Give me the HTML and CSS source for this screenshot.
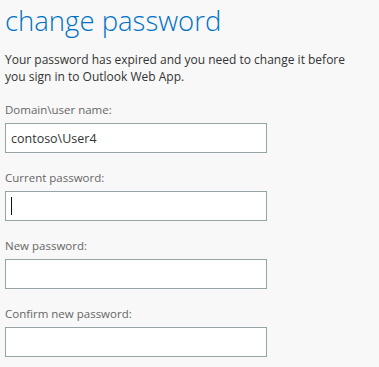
FILE: index.html
```html
<!DOCTYPE html>
<html lang="en">
<head>
  <meta charset="UTF-8">
  <title>change password</title>
  <link rel="stylesheet" href="styles.css">
</head>
<body>
  <div class="page">
    <h1 class="title">change password</h1>
    <p class="intro">Your password has expired and you need to change it before you sign in to Outlook Web App.</p>

    <form class="form">
      <div class="field">
        <label for="user">Domain\user name:</label>
        <input type="text" id="user" value="contoso\User4">
      </div>
      <div class="field">
        <label for="current">Current password:</label>
        <div class="input-wrap">
          <input type="password" id="current">
          <span class="caret"></span>
        </div>
      </div>
      <div class="field">
        <label for="newpass">New password:</label>
        <input type="password" id="newpass">
      </div>
      <div class="field">
        <label for="confirm">Confirm new password:</label>
        <input type="password" id="confirm">
      </div>
    </form>
  </div>
</body>
</html>
```

FILE: styles.css
```css
html, body {
  margin: 0;
  background-color: #f8f8f8;
}

body {
  font-family: "Open Sans", "Liberation Sans", sans-serif;
  color: #333;
}

.page {
  padding: 2px 0 0 5px;
}

.title {
  margin: 0;
  font-size: 27.5px;
  font-weight: 300;
  color: #0072c6;
  line-height: 38px;
}

.intro {
  margin: 11px 0 0;
  width: 360px;
  font-size: 12px;
  line-height: 17px;
  color: #333;
}

.form {
  margin-top: 18px;
  display: flex;
  flex-direction: column;
  gap: 18px;
}

.field label {
  display: block;
  font-size: 11.5px;
  line-height: 14px;
  color: #666;
  margin-bottom: 6px;
}

.field input {
  display: block;
  box-sizing: border-box;
  width: 262px;
  height: 30px;
  margin: 0;
  padding: 0 5px;
  border: 1px solid #98a3a6;
  background: #fff;
  font-family: inherit;
  font-size: 12.5px;
  color: #333;
  outline: none;
}

.input-wrap {
  position: relative;
  width: 262px;
}

.caret {
  position: absolute;
  left: 6px;
  top: 6px;
  width: 1px;
  height: 18px;
  background: #111;
}
```
